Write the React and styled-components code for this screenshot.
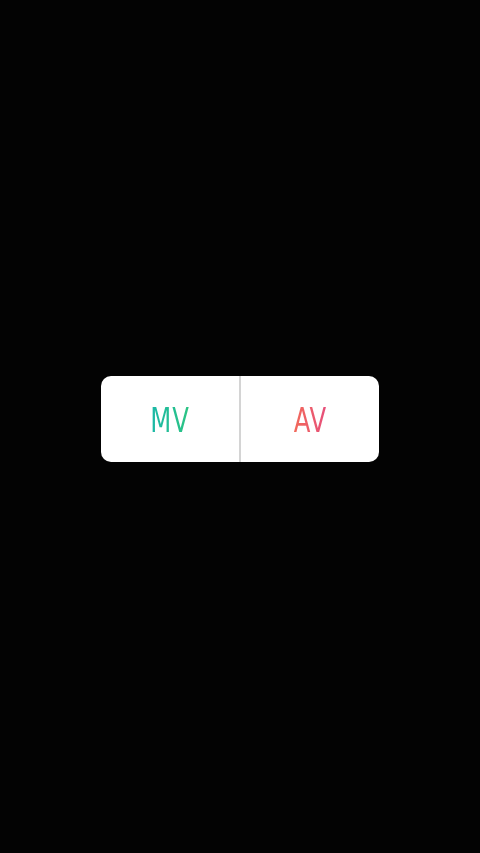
import styled, { createGlobalStyle } from "styled-components";

const Global = createGlobalStyle`
  html, body {
    margin: 0;
    padding: 0;
    background: #030303;
  }
  #root {
    min-height: 853px;
  }
`;

const Screen = styled.div`
  width: 480px;
  height: 853px;
  background: #030303;
  display: flex;
  justify-content: center;
  padding-top: 376px;
  box-sizing: border-box;
`;

const Card = styled.div`
  width: 278px;
  height: 86px;
  background: #ffffff;
  border-radius: 10px;
  display: flex;
  overflow: hidden;
`;

const Option = styled.button`
  flex: 1;
  border: none;
  background: transparent;
  display: flex;
  align-items: center;
  justify-content: center;
  padding: 0;
  cursor: pointer;
`;

const Divider = styled.div`
  width: 2px;
  background: #d4d4d4;
`;

const Label = styled.span`
  font-family: "DejaVu Sans Condensed", "Liberation Sans Narrow", sans-serif;
  font-size: 33px;
  font-weight: 400;
  display: inline-block;
  transform: scaleX(0.82);
  letter-spacing: 1px;
  background: ${(p) => p.$grad};
  -webkit-background-clip: text;
  background-clip: text;
  color: transparent;
  margin-top: 2px;
`;

export default function App() {
  return (
    <>
      <Global />
      <Screen>
        <Card>
          <Option>
            <Label $grad="linear-gradient(90deg, #1bb8a8, #2cc482)">MV</Label>
          </Option>
          <Divider />
          <Option>
            <Label $grad="linear-gradient(90deg, #f26a5a, #e64e7c)">AV</Label>
          </Option>
        </Card>
      </Screen>
    </>
  );
}
